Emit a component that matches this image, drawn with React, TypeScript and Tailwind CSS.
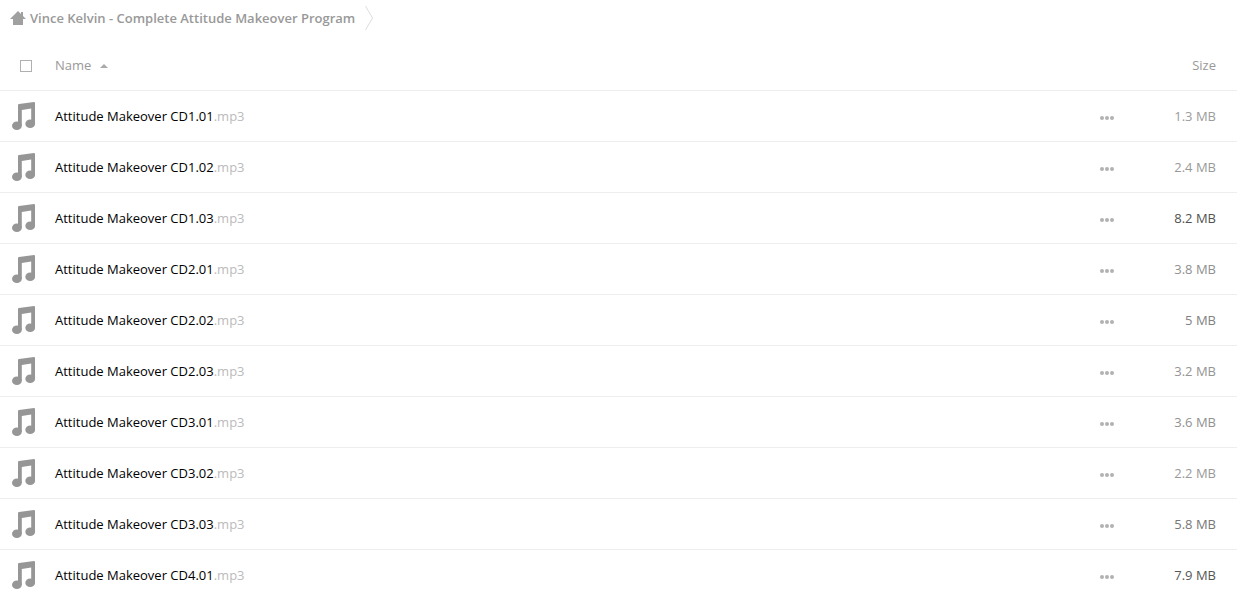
import React from "react";

type Track = { name: string; size: string; tone: string };

const tracks: Track[] = [
  { name: "Attitude Makeover CD1.01", size: "1.3 MB", tone: "text-[#9c9c9c]" },
  { name: "Attitude Makeover CD1.02", size: "2.4 MB", tone: "text-[#999999]" },
  { name: "Attitude Makeover CD1.03", size: "8.2 MB", tone: "text-[#515151]" },
  { name: "Attitude Makeover CD2.01", size: "3.8 MB", tone: "text-[#909090]" },
  { name: "Attitude Makeover CD2.02", size: "5 MB", tone: "text-[#828282]" },
  { name: "Attitude Makeover CD2.03", size: "3.2 MB", tone: "text-[#949494]" },
  { name: "Attitude Makeover CD3.01", size: "3.6 MB", tone: "text-[#919191]" },
  { name: "Attitude Makeover CD3.02", size: "2.2 MB", tone: "text-[#999999]" },
  { name: "Attitude Makeover CD3.03", size: "5.8 MB", tone: "text-[#777777]" },
  { name: "Attitude Makeover CD4.01", size: "7.9 MB", tone: "text-[#565656]" },
];

function HomeIcon() {
  return (
    <svg className="size-4" viewBox="0 0 16 16" fill="#a0a0a0" aria-hidden="true">
      <path d="M8 1 0 9h3v6h10V9h3l-3-3V2h-2v2z" />
    </svg>
  );
}

function NoteIcon() {
  return (
    <svg className="block size-8" viewBox="0 0 32 32" fill="#969696" aria-hidden="true">
      <path d="M10 5Q10 4.200 11 4L26 2Q27 2 27 3v21h-3.800V8.500L13.800 10V26H10z" />
      <ellipse cx="8.900" cy="25.800" rx="4.900" ry="4.300" />
      <ellipse cx="22.200" cy="23.700" rx="4.900" ry="4.300" />
    </svg>
  );
}

function DotsIcon() {
  return (
    <svg className="block size-4" viewBox="0 0 16 16" fill="#b2b2b2" aria-hidden="true">
      <circle cx="3" cy="8" r="2" />
      <circle cx="8" cy="8" r="2" />
      <circle cx="13" cy="8" r="2" />
    </svg>
  );
}

export default function App() {
  return (
    <main className="bg-white font-['Open_Sans',sans-serif] text-[13px] leading-5 text-[#999999]">
      <nav aria-label="Breadcrumb" className="flex h-10 items-start pt-1 pl-2.5">
        <a href="#home" className="flex h-7 items-center gap-1 font-semibold">
          <HomeIcon />
          Vince Kelvin - Complete Attitude Makeover Program
        </a>
        <svg className="ml-2.5 h-7 w-2" viewBox="0 0 8 28" fill="none" stroke="#dddddd" aria-hidden="true">
          <path d="M.5 2 7.500 14 .5 26" />
        </svg>
      </nav>
      <table className="w-full table-fixed border-collapse">
        <thead>
          <tr className="h-[50px] border-b border-[#eeeeee]">
            <th className="w-[55px] p-0 pt-0.5 pl-5 text-left">
              <input
                type="checkbox"
                aria-label="Select all"
                className="block size-3 appearance-none border border-[#b0b0b0] bg-white"
              />
            </th>
            <th className="p-0 pt-px text-left font-normal">
              <button type="button" className="flex items-center gap-2">
                Name
                <svg className="h-2 w-3" viewBox="0 0 12 8" fill="#aaaaaa" aria-hidden="true">
                  <path d="M1 7 5 3 9 7z" />
                </svg>
              </button>
            </th>
            <th className="w-[38px] p-0" aria-label="Actions" />
            <th className="w-[100px] p-0 pt-px pr-[21px] text-right font-normal">
              <button type="button">Size</button>
            </th>
          </tr>
        </thead>
        <tbody>
          {tracks.map((track) => (
            <tr key={track.name} className="h-[51px] border-b border-[#eeeeee] last:border-b-0">
              <td className="p-0 pl-2">
                <NoteIcon />
              </td>
              <td className="p-0">
                <a href="#track" className="text-black">
                  {track.name}
                  <span className="text-[#bbbbbb]">.mp3</span>
                </a>
              </td>
              <td className="p-0 pt-1">
                <button type="button" aria-label="More actions" className="block">
                  <DotsIcon />
                </button>
              </td>
              <td className={"p-0 pr-[21px] text-right " + track.tone}>{track.size}</td>
            </tr>
          ))}
        </tbody>
      </table>
    </main>
  );
}
